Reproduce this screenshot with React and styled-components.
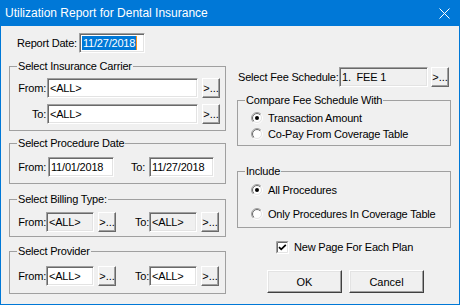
import styled, { createGlobalStyle } from "styled-components";

const GlobalStyle = createGlobalStyle`
    html, body {
        margin: 0;
        padding: 0;
        background: #f0f0f0;
    }
    body {
        font-family: "Liberation Sans", Arial, sans-serif;
        font-size: 11px;
        color: #000;
    }
`;

const Window = styled.div`
    width: 460px;
    height: 305px;
    box-sizing: border-box;
    border: 1px solid #0078d7;
    border-top: none;
    background: #f0f0f0;
    display: flex;
    flex-direction: column;
    overflow: hidden;
`;

const TitleBar = styled.div`
    height: 26px;
    flex: none;
    background: #0078d7;
    color: #fff;
    font-size: 12px;
    display: flex;
    align-items: center;
    justify-content: space-between;
    padding: 0 9px 0 4px;
`;

const Body = styled.div`
    display: flex;
    padding: 7px 0 0 8px;
    letter-spacing: -0.2px;
`;

const LeftCol = styled.div`
    width: 217px;
    display: flex;
    flex-direction: column;
`;

const RightCol = styled.div`
    width: 213px;
    margin-left: 11px;
    display: flex;
    flex-direction: column;
`;

const Row = styled.div`
    display: flex;
    align-items: center;
    height: ${(p) => p.$h || 20}px;
    margin-top: ${(p) => p.$mt || 0}px;
    padding-left: ${(p) => p.$pl || 0}px;
`;

const Label = styled.span`
    white-space: nowrap;
    width: ${(p) => (p.$w ? `${p.$w}px` : "auto")};
    text-align: ${(p) => (p.$right ? "right" : "left")};
    margin-left: ${(p) => p.$ml || 0}px;
    margin-right: ${(p) => p.$mr || 0}px;
    flex: none;
`;

const Field = styled.div`
    box-sizing: border-box;
    width: ${(p) => p.$w}px;
    height: 20px;
    flex: none;
    display: flex;
    align-items: center;
    padding-left: 2px;
    background: ${(p) => (p.$disabled ? "#f0f0f0" : "#fff")};
    border-style: solid;
    border-width: 1px;
    border-color: #a0a0a0 #fff #fff #a0a0a0;
    box-shadow: inset 1px 1px 0 #696969, inset -1px -1px 0 #e3e3e3;
    white-space: nowrap;
    overflow: hidden;
`;

const Selected = styled.span`
    background: #0078d7;
    color: #fff;
    height: 14px;
    line-height: 14px;
    padding: 0 1px;
    border-right: 1px solid #f7931e;
`;

const DotsButton = styled.div`
    box-sizing: border-box;
    width: 18px;
    height: 20px;
    flex: none;
    margin-left: ${(p) => p.$ml || 4}px;
    display: flex;
    align-items: center;
    justify-content: center;
    border-style: solid;
    border-width: 1px;
    border-color: #fff #696969 #696969 #fff;
    box-shadow: inset -1px -1px 0 #a0a0a0;
    letter-spacing: 0;
    padding-bottom: 1px;
`;

const Group = styled.fieldset`
    margin: ${(p) => p.$mt || 0}px 0 0 0;
    padding: 0;
    width: ${(p) => (p.$w ? `${p.$w}px` : "auto")};
    border: 1px solid #a0a0a0;
    min-width: 0;
`;

const Legend = styled.legend`
    margin-left: 7px;
    padding: 0 1px;
    line-height: 13px;
`;

const GroupBody = styled.div`
    display: flex;
    flex-direction: column;
    gap: ${(p) => p.$gap || 0}px;
    padding: ${(p) => p.$pt || 0}px 0 ${(p) => p.$pb || 0}px ${(p) => p.$pl || 8}px;
`;

const OptionRow = styled.div`
    display: flex;
    align-items: center;
    height: 16px;
    gap: 5px;
`;

const CheckRow = styled.div`
    display: flex;
    align-items: center;
    height: 14px;
    margin-top: 12px;
    padding-left: 39px;
    gap: 5px;
`;

const ButtonRow = styled.div`
    display: flex;
    gap: 7px;
    margin-top: 16px;
    padding-left: 30px;
`;

const PushButton = styled.div`
    box-sizing: border-box;
    width: 75px;
    height: 23px;
    display: flex;
    align-items: center;
    justify-content: center;
    border-style: solid;
    border-width: 1px;
    border-color: #fff #404040 #404040 #fff;
    box-shadow: inset -1px -1px 0 #a0a0a0, inset 1px 1px 0 #e3e3e3;
    letter-spacing: 0;
`;

function Radio({ checked }) {
    return (
        <svg width="12" height="12" viewBox="0 0 12 12">
            <defs>
                <linearGradient id="rOuter" x1="0" y1="0" x2="1" y2="1">
                    <stop offset="0.5" stopColor="#a0a0a0" />
                    <stop offset="0.5" stopColor="#ffffff" />
                </linearGradient>
                <linearGradient id="rInner" x1="0" y1="0" x2="1" y2="1">
                    <stop offset="0.5" stopColor="#696969" />
                    <stop offset="0.5" stopColor="#e3e3e3" />
                </linearGradient>
            </defs>
            <circle cx="6" cy="6" r="5.5" fill="none" stroke="url(#rOuter)" />
            <circle cx="6" cy="6" r="4.5" fill="#fff" stroke="url(#rInner)" />
            {checked && <circle cx="6" cy="6" r="2" fill="#000" />}
        </svg>
    );
}

function CheckBox() {
    return (
        <svg width="13" height="13" viewBox="0 0 13 13">
            <rect x="0" y="0" width="13" height="13" fill="#fff" />
            <path d="M0.5 12.5V0.5H12.5" fill="none" stroke="#a0a0a0" />
            <path d="M1.5 11.5V1.5H11.5" fill="none" stroke="#696969" />
            <path d="M12.5 0.5V12.5H0.5" fill="none" stroke="#fff" />
            <path d="M11.5 1.5V11.5H1.5" fill="none" stroke="#e3e3e3" />
            <path d="M3 6.2L5.2 8.4L9.8 3.8" fill="none" stroke="#000" strokeWidth="1.7" />
        </svg>
    );
}

function CloseIcon() {
    return (
        <svg width="11" height="11" viewBox="0 0 11 11">
            <path d="M0.5 0.5L10.5 10.5M10.5 0.5L0.5 10.5" stroke="#fff" strokeWidth="1" />
        </svg>
    );
}

export default function App() {
    return (
        <>
            <GlobalStyle />
            <Window>
                <TitleBar>
                    <span>Utilization Report for Dental Insurance</span>
                    <CloseIcon />
                </TitleBar>
                <Body>
                    <LeftCol>
                        <Row $pl={8}>
                            <Label $mr={2}>Report Date:</Label>
                            <Field $w={66}>
                                <Selected>11/27/2018</Selected>
                            </Field>
                        </Row>

                        <Group $mt={7}>
                            <Legend>Select Insurance Carrier</Legend>
                            <GroupBody $pt={5} $pb={6} $gap={6}>
                                <Row>
                                    <Label $w={28} $right $mr={1}>From:</Label>
                                    <Field $w={151}>&lt;ALL&gt;</Field>
                                    <DotsButton>&gt;...</DotsButton>
                                </Row>
                                <Row>
                                    <Label $w={28} $right $mr={1}>To:</Label>
                                    <Field $w={151}>&lt;ALL&gt;</Field>
                                    <DotsButton>&gt;...</DotsButton>
                                </Row>
                            </GroupBody>
                        </Group>

                        <Group $mt={6}>
                            <Legend>Select Procedure Date</Legend>
                            <GroupBody $pt={7} $pb={6}>
                                <Row>
                                    <Label $w={28} $right $mr={2}>From:</Label>
                                    <Field $w={66}>11/01/2018</Field>
                                    <Label $ml={17} $mr={4}>To:</Label>
                                    <Field $w={65}>11/27/2018</Field>
                                </Row>
                            </GroupBody>
                        </Group>

                        <Group $mt={9}>
                            <Legend>Select Billing Type:</Legend>
                            <GroupBody $pt={6} $pb={4}>
                                <Row>
                                    <Label $w={28} $right>From:</Label>
                                    <Field $w={48} $disabled>&lt;ALL&gt;</Field>
                                    <DotsButton>&gt;...</DotsButton>
                                    <Label $ml={19}>To:</Label>
                                    <Field $w={48} $disabled>&lt;ALL&gt;</Field>
                                    <DotsButton>&gt;...</DotsButton>
                                </Row>
                            </GroupBody>
                        </Group>

                        <Group $mt={8}>
                            <Legend>Select Provider</Legend>
                            <GroupBody $pt={8} $pb={7}>
                                <Row>
                                    <Label $w={28} $right>From:</Label>
                                    <Field $w={48}>&lt;ALL&gt;</Field>
                                    <DotsButton>&gt;...</DotsButton>
                                    <Label $ml={19}>To:</Label>
                                    <Field $w={48}>&lt;ALL&gt;</Field>
                                    <DotsButton>&gt;...</DotsButton>
                                </Row>
                            </GroupBody>
                        </Group>
                    </LeftCol>

                    <RightCol>
                        <Row $mt={34} $pl={1}>
                            <Label $w={101}>Select Fee Schedule:</Label>
                            <Field $w={89} $disabled>1.&nbsp; FEE 1</Field>
                            <DotsButton $ml={3}>&gt;...</DotsButton>
                        </Row>

                        <Group $mt={7} $w={212}>
                            <Legend>Compare Fee Schedule With</Legend>
                            <GroupBody $pt={3} $pb={3} $pl={13}>
                                <OptionRow>
                                    <Radio checked />
                                    <span>Transaction Amount</span>
                                </OptionRow>
                                <OptionRow>
                                    <Radio />
                                    <span>Co-Pay From Coverage Table</span>
                                </OptionRow>
                            </GroupBody>
                        </Group>

                        <Group $mt={19} $w={212}>
                            <Legend>Include</Legend>
                            <GroupBody $pt={4} $pb={5} $pl={13} $gap={8}>
                                <OptionRow>
                                    <Radio checked />
                                    <span>All Procedures</span>
                                </OptionRow>
                                <OptionRow>
                                    <Radio />
                                    <span>Only Procedures In Coverage Table</span>
                                </OptionRow>
                            </GroupBody>
                        </Group>

                        <CheckRow>
                            <CheckBox />
                            <span>New Page For Each Plan</span>
                        </CheckRow>

                        <ButtonRow>
                            <PushButton>OK</PushButton>
                            <PushButton>Cancel</PushButton>
                        </ButtonRow>
                    </RightCol>
                </Body>
            </Window>
        </>
    );
}
